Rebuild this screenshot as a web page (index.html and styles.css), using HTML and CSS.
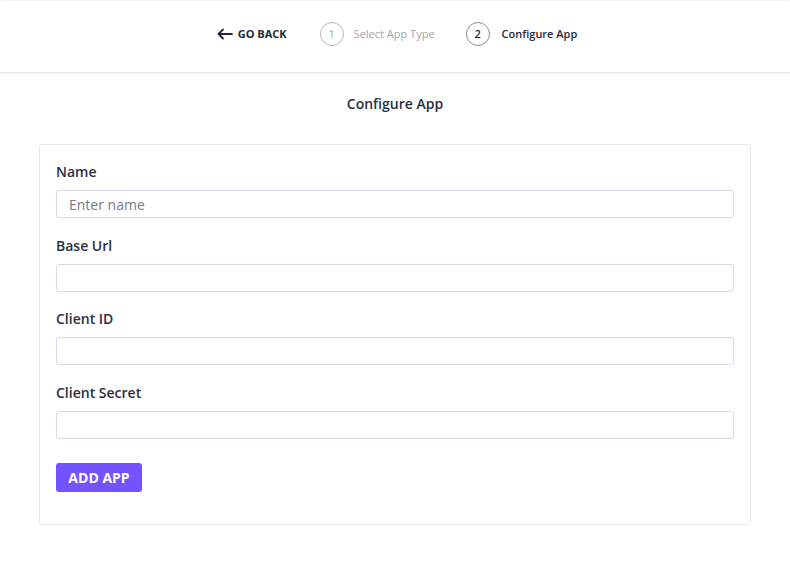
FILE: index.html
```html
<!DOCTYPE html>
<html>
<head>
<meta charset="utf-8">
<link rel="stylesheet" href="styles.css">
</head>
<body>
<header class="topbar">
  <nav class="steps">
    <a class="back">
      <svg width="16" height="12" viewBox="0 0 16 12"><path d="M6 1.5 L1.5 6 L6 10.5 M1.5 6 H15" fill="none" stroke="#23283a" stroke-width="1.8" stroke-linecap="round" stroke-linejoin="round"/></svg>
      <span>GO BACK</span>
    </a>
    <div class="step muted"><span class="num">1</span><span>Select App Type</span></div>
    <div class="step active"><span class="num">2</span><span>Configure App</span></div>
  </nav>
</header>
<main class="content">
  <h1 class="title">Configure App</h1>
  <form class="card">
    <label class="field"><span class="label">Name</span><input class="input" placeholder="Enter name"></label>
    <label class="field"><span class="label">Base Url</span><input class="input"></label>
    <label class="field"><span class="label">Client ID</span><input class="input"></label>
    <label class="field"><span class="label">Client Secret</span><input class="input"></label>
    <div class="actions"><button type="button" class="btn">ADD APP</button></div>
  </form>
</main>
</body>
</html>
```
FILE: styles.css
```css
* { box-sizing: border-box; }
html, body { margin: 0; padding: 0; background: #fff; }
body { font-family: "Open Sans", "Noto Sans", sans-serif; color: #2b2f3f; }
.topbar {
  height: 73px;
  border-bottom: 1px solid #e6e6e6;
  box-shadow: 0 1px 3px rgba(0,0,0,0.06), inset 0 2px 2px -1px rgba(0,0,0,0.05);
  display: flex;
  align-items: center;
  justify-content: center;
  padding-left: 4px;
}
.steps { display: flex; align-items: center; height: 24px; margin-top: -5px; }
.back { display: flex; align-items: center; gap: 5px; font-size: 11px; font-weight: 700; color: #23283a; margin-right: 33px; }
.back svg { display: block; }
.step { display: flex; align-items: center; font-size: 11px; }
.step .num {
  width: 24px; height: 24px; border-radius: 50%;
  display: inline-flex; align-items: center; justify-content: center;
  border: 1px solid #b8b8bc; margin-right: 10px; font-size: 11px;
}
.step.muted { color: #a2a4ab; margin-right: 31px; }
.step.active { color: #23283a; font-weight: 600; }
.step.active .num { border-color: #8b8d95; font-weight: 600; margin-right: 12px; }
.content { padding: 0 39px 0 39px; }
.title { margin: 21px 0 0; text-align: center; font-size: 14px; line-height: 20px; font-weight: 600; color: #2b2f3f; }
.card {
  margin-top: 30px;
  border: 1px solid #e6e7ee;
  border-radius: 3px;
  padding: 17px 16px 32px 16px;
  display: flex; flex-direction: column; gap: 17.67px;
}
.field { display: flex; flex-direction: column; gap: 8px; }
.label { font-size: 14px; line-height: 20px; font-weight: 600; color: #2b2f3f; }
.input {
  height: 28px; width: 100%;
  border: 1px solid #d6dae6; border-radius: 3px;
  padding: 0 12px;
  font-family: inherit; font-size: 14px; color: #2b2f3f;
  outline: none; background: #fff;
}
.input::placeholder { color: #757b88; }
.actions { margin-top: 6px; display: flex; }
.btn {
  height: 29px; width: 86px;
  border: none; border-radius: 3px;
  background: #7352ff; color: #fff;
  font-family: inherit; font-size: 14px; font-weight: 700;
  padding: 0; cursor: pointer;
}
```
